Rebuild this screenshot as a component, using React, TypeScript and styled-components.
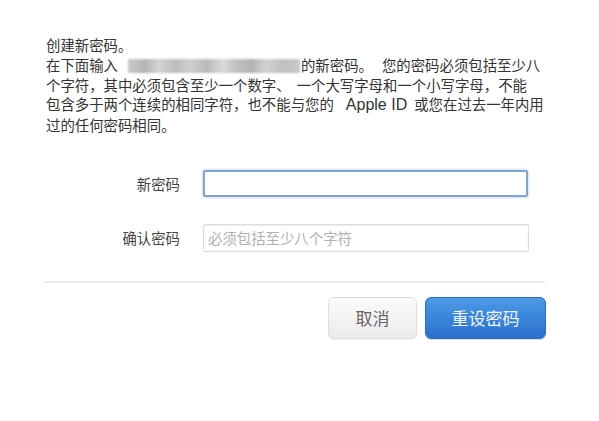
import React from "react";
import styled, { createGlobalStyle } from "styled-components";

const Global = createGlobalStyle`
  html, body { margin: 0; padding: 0; background: #fff; }
  body { font-family: "Noto Sans CJK SC", "Noto Sans", sans-serif; }
`;

const Page = styled.div`
  width: 599px;
  height: 421px;
  padding: 35px 0 0 46px;
  box-sizing: border-box;
  color: #333;
`;

const Intro = styled.div`
  font-size: 14.4px;
  line-height: 19.8px;
  width: 510px;
`;

const Line = styled.div`
  white-space: nowrap;
`;

const Gap = styled.span<{ $w: number }>`
  display: inline-block;
  width: ${(p) => p.$w}px;
`;

const Latin = styled.span`
  font-family: "Liberation Sans", Arial, sans-serif;
  font-size: 16px;
`;

const Redacted = styled.span`
  display: inline-block;
  vertical-align: -2px;
  width: 172px;
  height: 14px;
  margin: 0 1px 0 0;
  background: linear-gradient(
    90deg,
    #c9c9c9 0%, #b5b5b5 10%, #d4d4d4 18%, #bcbcbc 28%, #cfcfcf 36%,
    #b9b9b9 46%, #dadada 55%, #c0c0c0 63%, #b3b3b3 72%, #d2d2d2 80%,
    #bfbfbf 90%, #cacaca 100%
  );
  filter: blur(1.2px);
`;

const Form = styled.div`
  margin-top: 35px;
  margin-left: -1px;
  display: flex;
  flex-direction: column;
  gap: 27px;
`;

const Row = styled.div`
  display: flex;
  align-items: center;
  gap: 23px;
`;

const Label = styled.label`
  width: 135px;
  text-align: right;
  font-size: 14.4px;
  color: #444;
`;

const Input = styled.input<{ $focused?: boolean }>`
  box-sizing: border-box;
  width: ${(p) => (p.$focused ? 325 : 326)}px;
  height: ${(p) => (p.$focused ? 27 : 28)}px;
  padding: 0 4px;
  font-family: "Noto Sans CJK SC", "Noto Sans", sans-serif;
  font-size: 14.4px;
  color: #333;
  outline: none;
  border-radius: 2px;
  border: ${(p) => (p.$focused ? "2px solid #7ea4d3" : "1px solid #dcdcdc")};
  box-shadow: ${(p) =>
    p.$focused
      ? "0 0 3px rgba(90,140,210,0.55)"
      : "inset 0 1px 2px rgba(0,0,0,0.08)"};
  &::placeholder { color: #b0b0b0; }
`;

const Divider = styled.hr`
  margin: 29px 0 0 -2px;
  width: 501px;
  border: none;
  height: 2px;
  background: #ececec;
`;

const Actions = styled.div`
  width: 500px;
  margin-top: 14px;
  display: flex;
  justify-content: flex-end;
  gap: 8px;
`;

const Button = styled.button<{ $primary?: boolean }>`
  box-sizing: border-box;
  height: 42px;
  width: ${(p) => (p.$primary ? 121 : 89)}px;
  border-radius: 6px;
  font-family: "Noto Sans CJK SC", "Noto Sans", sans-serif;
  font-size: 17px;
  cursor: pointer;
  ${(p) =>
    p.$primary
      ? `
    color: #eef4fb;
    border: 1px solid #2f6fc2;
    background: linear-gradient(180deg, #4e9ae6 0%, #3a85da 50%, #2c6fcb 100%);
    box-shadow: 0 1px 1px rgba(0,0,0,0.15);
  `
      : `
    color: #666;
    border: 1px solid #dedede;
    background: linear-gradient(180deg, #fbfbfb 0%, #f2f2f2 60%, #ebebeb 100%);
    box-shadow: 0 1px 1px rgba(0,0,0,0.06);
  `}
`;

export default function App() {
  return (
    <Page>
      <Global />
      <Intro>
        <Line>创建新密码。</Line>
        <Line>
          在下面输入<Gap $w={10} />
          <Redacted />
          的新密码。<Gap $w={9} />您的密码必须包括至少八
        </Line>
        <Line>
          个字符，其中必须包含至少一个数字、<Gap $w={6} />一个大写字母和一个小写字母，不能
        </Line>
        <Line>
          包含多于两个连续的相同字符，也不能与您的<Gap $w={12} />
          <Latin>Apple ID</Latin>
          <Gap $w={7} />或您在过去一年内用
        </Line>
        <Line>过的任何密码相同。</Line>
      </Intro>
      <Form>
        <Row>
          <Label>新密码</Label>
          <Input $focused type="password" />
        </Row>
        <Row>
          <Label>确认密码</Label>
          <Input type="password" placeholder="必须包括至少八个字符" />
        </Row>
      </Form>
      <Divider />
      <Actions>
        <Button>取消</Button>
        <Button $primary>重设密码</Button>
      </Actions>
    </Page>
  );
}
